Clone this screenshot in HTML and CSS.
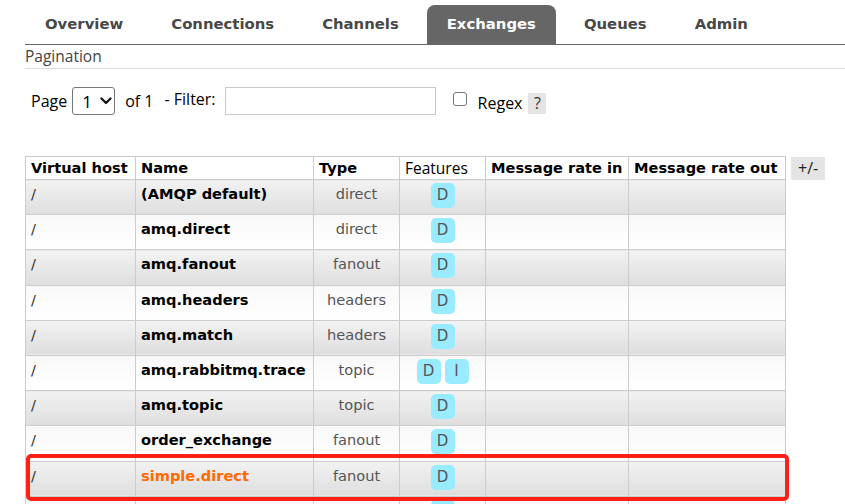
FILE: index.html
```html
<!DOCTYPE html>
<html>
<head>
<meta charset="utf-8">
<link rel="stylesheet" href="styles.css">
</head>
<body>
<div class="page">
  <ul class="tabs">
    <li class="tab">Overview</li>
    <li class="tab">Connections</li>
    <li class="tab">Channels</li>
    <li class="tab active">Exchanges</li>
    <li class="tab">Queues</li>
    <li class="tab">Admin</li>
  </ul>
  <div class="section-title">Pagination</div>
  <div class="pager">
    <span class="lbl">Page</span>
    <span class="select">1
      <svg width="12" height="8" viewBox="0 0 12 8"><path d="M1.5 1.5 L6 6 L10.5 1.5" fill="none" stroke="#111" stroke-width="2.2" stroke-linecap="round" stroke-linejoin="round"/></svg>
    </span>
    <span class="lbl of">of 1</span>
    <span class="lbl filter">- Filter:</span>
    <span class="input"></span>
    <span class="checkbox"></span>
    <span class="lbl regex">Regex</span>
    <span class="help">?</span>
  </div>
  <div class="table-wrap">
    <table class="list">
      <colgroup>
        <col class="c-vhost"><col class="c-name"><col class="c-type"><col class="c-feat"><col class="c-in"><col class="c-out">
      </colgroup>
      <thead>
        <tr>
          <th>Virtual host</th>
          <th>Name</th>
          <th>Type</th>
          <th class="plain">Features</th>
          <th>Message rate in</th>
          <th>Message rate out</th>
        </tr>
      </thead>
      <tbody>
        <tr class="odd"><td>/</td><td class="name">(AMQP default)</td><td class="type">direct</td><td class="feat"><span class="badge">D</span></td><td></td><td></td></tr>
        <tr class="even"><td>/</td><td class="name">amq.direct</td><td class="type">direct</td><td class="feat"><span class="badge">D</span></td><td></td><td></td></tr>
        <tr class="odd"><td>/</td><td class="name">amq.fanout</td><td class="type">fanout</td><td class="feat"><span class="badge">D</span></td><td></td><td></td></tr>
        <tr class="even"><td>/</td><td class="name">amq.headers</td><td class="type">headers</td><td class="feat"><span class="badge">D</span></td><td></td><td></td></tr>
        <tr class="odd"><td>/</td><td class="name">amq.match</td><td class="type">headers</td><td class="feat"><span class="badge">D</span></td><td></td><td></td></tr>
        <tr class="even"><td>/</td><td class="name">amq.rabbitmq.trace</td><td class="type">topic</td><td class="feat"><span class="badge">D</span><span class="badge">I</span></td><td></td><td></td></tr>
        <tr class="odd"><td>/</td><td class="name">amq.topic</td><td class="type">topic</td><td class="feat"><span class="badge">D</span></td><td></td><td></td></tr>
        <tr class="even"><td>/</td><td class="name">order_exchange</td><td class="type">fanout</td><td class="feat"><span class="badge">D</span></td><td></td><td></td></tr>
        <tr class="odd"><td>/</td><td class="name hl">simple.direct</td><td class="type">fanout</td><td class="feat"><span class="badge">D</span></td><td></td><td></td></tr>
        <tr class="even"><td></td><td></td><td></td><td class="feat"><span class="badge empty"></span></td><td></td><td></td></tr>
      </tbody>
    </table>
    <span class="toggle">+/-</span>
    <div class="annotation"></div>
  </div>
</div>
</body>
</html>
```

FILE: styles.css
```css
html, body {
  margin: 0;
  padding: 0;
  background: #fff;
  overflow: hidden;
}
body {
  font-family: "DejaVu Sans", Verdana, sans-serif;
  font-size: 15px;
  color: #000;
}
.page {
  padding-left: 25px;
  width: 900px;
}
.tabs {
  list-style: none;
  margin: 5px 0 0 0;
  padding: 0;
  display: flex;
  border-bottom: 1px solid #666;
  height: 39px;
}
.tab {
  padding: 0 20px;
  margin-right: 8px;
  line-height: 39px;
  font-weight: bold;
  color: #484848;
  font-size: 14.85px;
}
.tab.active {
  background: #666;
  color: #fff;
  border-radius: 8px 8px 0 0;
}
.section-title {
  font-family: "Open Sans", "Noto Sans", sans-serif;
  font-size: 15.5px;
  color: #444;
  height: 23px;
  line-height: 23px;
  border-bottom: 1px solid #ddd;
}
.pager {
  display: flex;
  align-items: center;
  height: 28px;
  margin-top: 18px;
  padding-left: 6px;
  font-family: "Open Sans", "Noto Sans", sans-serif;
  font-size: 16px;
}
.lbl {
  line-height: 28px;
}
.select {
  display: inline-flex;
  align-items: center;
  gap: 8px;
  box-sizing: border-box;
  width: 43px;
  height: 28px;
  margin-left: 5px;
  padding-left: 9px;
  border: 1px solid #767676;
  border-radius: 3px;
  font-size: 17px;
}
.of { margin-left: 10px; }
.filter { margin-left: 11px; position: relative; top: -2px; }
.input {
  display: inline-block;
  box-sizing: border-box;
  width: 211px;
  height: 28px;
  margin-left: 9px;
  border: 1px solid #c8c8c8;
}
.checkbox {
  display: inline-block;
  box-sizing: border-box;
  width: 14px;
  height: 14px;
  margin-left: 17px;
  border: 1px solid #767676;
  border-radius: 3px;
  position: relative;
  top: -2px;
}
.regex { margin-left: 11px; position: relative; top: 2px; }
.help {
  display: inline-block;
  width: 18px;
  height: 21px;
  line-height: 21px;
  margin-left: 6px;
  text-align: center;
  background: #e4e4e4;
  color: #333;
  position: relative;
  top: 2px;
}
.table-wrap {
  margin-top: 41px;
  display: flex;
  align-items: flex-start;
  gap: 5px;
  position: relative;
}
.list {
  border-collapse: collapse;
  border: 1px solid #ccc;
  table-layout: fixed;
  width: 760px;
  font-size: 14.6px;
}
.c-vhost { width: 110px; }
.c-name { width: 178px; }
.c-type { width: 86px; }
.c-feat { width: 86px; }
.c-in { width: 143px; }
.c-out { width: 157px; }
.list th {
  text-align: left;
  font-weight: bold;
  padding: 0 5px;
  height: 22px;
  line-height: 22px;
  border: 1px solid #ccc;
  background: #fff;
  white-space: nowrap;
  overflow: hidden;
}
.list th.plain {
  font-weight: normal;
  font-family: "Open Sans", "Noto Sans", sans-serif;
  font-size: 15.5px;
}
.list td {
  height: 35.2px;
  box-sizing: border-box;
  padding: 5px 5px 0 5px;
  vertical-align: top;
  border: 1px solid #ccc;
  white-space: nowrap;
  color: #333;
}
.list tr.odd td {
  background: linear-gradient(#f2f2f2, #dedede);
}
.list tr.even td {
  background: linear-gradient(#f8f8f8, #ffffff);
}
.list td.name {
  font-weight: bold;
  color: #000;
}
.list td.name.hl {
  color: #ff6a00;
}
.list td.type {
  text-align: center;
  color: #555;
}
.list td.feat {
  text-align: center;
  padding-top: 3px;
}
.badge {
  display: inline-block;
  min-width: 12px;
  height: 25px;
  line-height: 25px;
  padding: 0 6px;
  margin: 0 2px;
  background: #99ebff;
  border-radius: 5px;
  color: #555;
  font-size: 15px;
  vertical-align: top;
}
.toggle {
  display: inline-block;
  height: 23px;
  line-height: 23px;
  padding: 0 7px;
  margin-top: 1px;
  background: #e4e4e4;
  font-family: "Open Sans", "Noto Sans", sans-serif;
  font-size: 16px;
  color: #222;
}
.annotation {
  position: absolute;
  left: 1px;
  top: 298px;
  width: 763px;
  height: 47px;
  box-sizing: border-box;
  border: 4px solid #ff2016;
  border-radius: 5px;
}
```
